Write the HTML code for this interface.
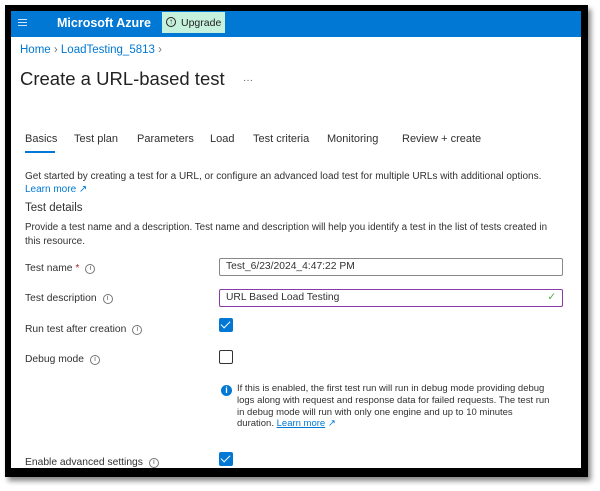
<!DOCTYPE html>
<html><head><style>
body{margin:0;width:600px;height:491px;background:#fff;position:relative;overflow:hidden;font-family:"Liberation Sans",sans-serif;color:#323130}
.a{position:absolute;white-space:nowrap}
.f{position:absolute;left:5px;top:5px;width:583px;height:472px;background:#000;box-shadow:3px 4px 5px #888}
.w{position:absolute;left:11px;top:11px;width:570px;height:457px;background:#fff;overflow:hidden}
.s{font-size:10px}
.lbl{font-size:10.3px;color:#323130}
.i{display:inline-block;width:8px;height:8px;border:1px solid #777;border-radius:50%;font-size:7px;line-height:8px;text-align:center;color:#555;margin-left:6px;vertical-align:1px}
.cb{position:absolute;width:14px;height:14px;background:#0078d4;border-radius:2px}
.cb:after{content:"";position:absolute;left:4px;top:1px;width:4px;height:8px;border:solid #fff;border-width:0 1.5px 1.5px 0;transform:rotate(45deg)}
.in{position:absolute;left:208px;width:336px;height:16px;border:1px solid #8a8886;border-radius:2px;font-size:10.3px;line-height:16px;padding-left:6px;box-sizing:content-box}
</style></head><body>
<div class="f"></div>
<div class="w">
<div class="a" style="left:0;top:0;width:570px;height:26px;background:#0078d4"></div>
<div class="a" style="left:7px;top:8px;width:9px;height:1.3px;background:#cfe4f7;box-shadow:0 3px 0 #cfe4f7,0 6px 0 #cfe4f7"></div>
<div class="a" style="left:46px;top:5px;font-size:12.5px;font-weight:bold;color:#fff">Microsoft Azure</div>
<div class="a" style="left:151px;top:1px;width:63px;height:21px;background:#c6f1dc"></div>
<div class="a" style="left:155px;top:6px;width:8px;height:8px;border:1.3px solid #222;border-radius:50%;font-size:8px;line-height:8px;text-align:center">↑</div>
<div class="a" style="left:170px;top:6px;font-size:10.5px;color:#222">Upgrade</div>
<div class="a" style="left:9px;top:33px;font-size:11.5px;color:#0078d4">Home <span style="color:#777">›</span> LoadTesting_5813 <span style="color:#777">›</span></div>
<div class="a" style="left:9px;top:57px;font-size:18.5px;color:#222">Create a URL-based test</div>
<div class="a" style="left:232px;top:64px;font-size:10px;color:#555">···</div>
<div class="a" style="left:14px;top:122px;font-size:11px">Basics</div>
<div class="a" style="left:14px;top:140px;width:30px;height:2px;background:#0078d4"></div>
<div class="a" style="left:63px;top:122px;font-size:11px">Test plan</div>
<div class="a" style="left:126px;top:122px;font-size:11px">Parameters</div>
<div class="a" style="left:199px;top:122px;font-size:11px">Load</div>
<div class="a" style="left:242px;top:122px;font-size:11px">Test criteria</div>
<div class="a" style="left:316px;top:122px;font-size:11px">Monitoring</div>
<div class="a" style="left:391px;top:122px;font-size:11px">Review + create</div>
<div class="a s" style="left:14px;top:160px">Get started by creating a test for a URL, or configure an advanced load test for multiple URLs with additional options.</div>
<div class="a s" style="left:14px;top:173px;color:#0078d4">Learn more ↗</div>
<div class="a" style="left:14px;top:191px;font-size:11.5px">Test details</div>
<div class="a s" style="left:14px;top:211px;font-size:9.8px">Provide a test name and a description. Test name and description will help you identify a test in the list of tests created in</div>
<div class="a s" style="left:14px;top:225px">this resource.</div>
<div class="a lbl" style="left:14px;top:252px">Test name <span style="color:#a4262c">*</span><span class="i">i</span></div>
<div class="in" style="top:247px">Test_6/23/2024_4:47:22 PM</div>
<div class="a lbl" style="left:14px;top:282px">Test description<span class="i">i</span></div>
<div class="in" style="top:278px;border-color:#8a3aa6">URL Based Load Testing<span style="position:absolute;right:6px;color:#57a64a">✓</span></div>
<div class="a lbl" style="left:14px;top:313px">Run test after creation<span class="i">i</span></div>
<div class="cb" style="left:208px;top:307px"></div>
<div class="a lbl" style="left:14px;top:343px">Debug mode<span class="i">i</span></div>
<div class="a" style="left:208px;top:339px;width:12px;height:12px;border:1.3px solid #333;border-radius:2px"></div>
<div class="a" style="left:210px;top:374px;width:11px;height:11px;background:#0078d4;border-radius:50%;color:#fff;font-size:9px;font-weight:bold;line-height:11px;text-align:center">i</div>
<div class="a" style="left:226px;top:372px;font-size:9.5px;line-height:11.8px">If this is enabled, the first test run will run in debug mode providing debug<br>logs along with request and response data for failed requests. The test run<br>in debug mode will run with only one engine and up to 10 minutes<br>duration. <span style="color:#0078d4;text-decoration:underline">Learn more</span> <span style="color:#0078d4">↗</span></div>
<div class="a lbl" style="left:14px;top:446px">Enable advanced settings<span class="i">i</span></div>
<div class="cb" style="left:208px;top:441px"></div>
</div>
</body></html>
